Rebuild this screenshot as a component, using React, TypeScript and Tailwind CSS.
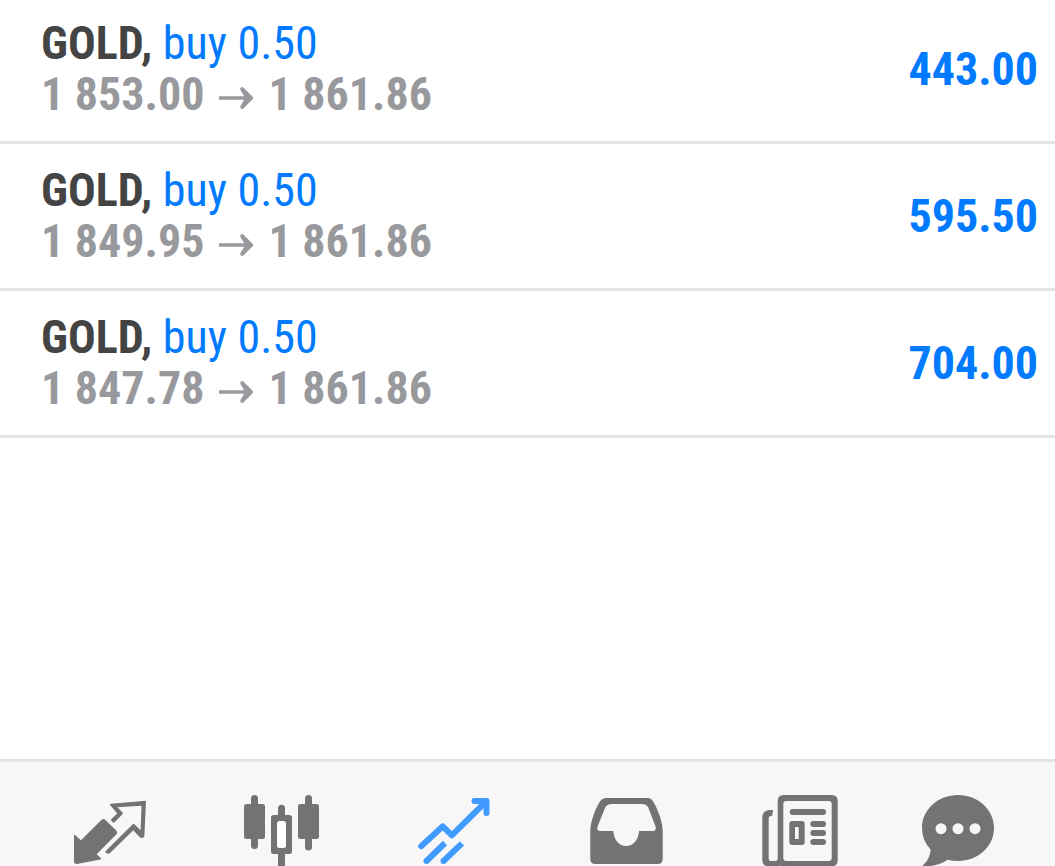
import type { ReactNode } from "react"

type Position = {
  symbol: string
  side: string
  volume: string
  open: string
  current: string
  profit: string
}

const positions: Position[] = [
  { symbol: "GOLD", side: "buy", volume: "0.50", open: "1 853.00", current: "1 861.86", profit: "443.00" },
  { symbol: "GOLD", side: "buy", volume: "0.50", open: "1 849.95", current: "1 861.86", profit: "595.50" },
  { symbol: "GOLD", side: "buy", volume: "0.50", open: "1 847.78", current: "1 861.86", profit: "704.00" },
]

function PriceArrow() {
  return (
    <svg viewBox="0 0 36 24" className="mx-3.5 mt-1.5 h-6 w-9 shrink-0" fill="currentColor" aria-hidden="true">
      <path d="M1 10.3H26.2L22.4 4Q21.8 1.6 23.4 1.2Q24.6 0.8 25.6 1.8L34.6 10.8Q35.6 12 34.6 13.2L25.6 22.2Q24.6 23.2 23.4 22.8Q21.8 22.4 22.4 20L26.2 13.7H1Z" />
    </svg>
  )
}

function PositionRow({ position }: { position: Position }) {
  return (
    <li className="flex items-center justify-between border-b-3 border-[#e4e4e4] py-[21px] pr-[17px] pl-[41px]">
      <div>
        <p>
          <span className="font-bold text-[#444444]">{position.symbol},</span>{" "}
          <span className="text-[#007aff]">
            {position.side} {position.volume}
          </span>
        </p>
        <p className="flex items-center font-bold text-[#98999d]">
          {position.open}
          <PriceArrow />
          {position.current}
        </p>
      </div>
      <p className="font-bold text-[#007aff]">{position.profit}</p>
    </li>
  )
}

function TabIcon({ children }: { children: ReactNode }) {
  return (
    <svg viewBox="0 0 80 76" className="h-[76px] w-20" fill="currentColor" aria-hidden="true">
      {children}
    </svg>
  )
}

function QuotesIcon() {
  return (
    <TabIcon>
      <path d="M4 45.5Q4 44.3 5 45L11 50.3L31.8 29.6Q33.3 28.3 34.8 29.6L46.3 40.6Q48 42.4 46.5 44.2L26.7 64.3L31 68.2Q31.8 69.2 30.5 69.5L7 74Q4 74.2 4 71Z" />
      <path d="M39.8 14.8Q39.4 13.8 41 13.7L76 10.8L74.4 46Q74.2 48 72 48Q70.4 48 69.5 47L63.3 40.2L40 63Q38.8 64 37.3 63.5L35.8 62.8Q34.8 62 35.8 61L62.5 34.5Q63.5 33.3 64.5 34.3L70.6 40.2L71.5 15.7L47.5 17.3L52.5 22.4Q53.2 23.4 52.5 24.3L44.5 32.2Q43.6 33 42.7 32.2L41.3 30.8Q40.6 29.8 41.5 29L47.2 23.5Z" />
    </TabIcon>
  )
}

function ChartIcon() {
  return (
    <TabIcon>
      <rect x="8" y="5" width="7" height="54" rx="3.5" />
      <rect x="1" y="14" width="21" height="35" rx="2.5" />
      <rect x="62" y="5" width="7" height="55.5" rx="3.5" />
      <rect x="55" y="14" width="21" height="35" rx="2.5" />
      <rect x="35" y="14.7" width="7" height="70" rx="3.5" />
      <rect x="28" y="25" width="21" height="39" rx="2.5" />
      <rect x="34" y="31" width="9" height="27" rx="2.5" fill="#fff" />
    </TabIcon>
  )
}

function TradeIcon() {
  return (
    <TabIcon>
      <g fill="none" stroke="currentColor" strokeWidth="6" strokeLinejoin="round">
        <path d="M5.2 56.3L26.8 36.3L35.8 45.3L69.5 12" strokeLinecap="round" />
        <path d="M58.5 11H70.5V23" strokeLinecap="round" />
        <path d="M10.5 71L29 53M27.5 71L46 53.3" />
      </g>
      <path d="M62 12H70V20Z" />
      <circle cx="10.5" cy="71" r="3" />
      <circle cx="27.5" cy="71" r="3" />
    </TabIcon>
  )
}

function HistoryIcon() {
  return (
    <TabIcon>
      <path
        fillRule="evenodd"
        d="M18.5 8H59.5Q63 8 64.8 11C70 19 74.7 32 74.7 41V69Q74.7 74 69.7 74H7.3Q2.3 74 2.3 69V41C2.3 32 7 19 12.2 11Q14.5 8 18.5 8ZM23.5 14Q19 14 17.2 17.5L9.4 37Q8.5 41 12.5 41H25.3C25.8 50 31.5 56 38.2 56S50.6 50 51 41H64.5Q68.5 41 67.7 37L60.2 17.5Q58.5 14 54 14Z"
      />
    </TabIcon>
  )
}

function NewsIcon() {
  return (
    <TabIcon>
      <path d="M12 20L11.3 25.7C8.5 25.8 7.7 26.5 7.7 28.5V69Q7.7 71 9.7 71H14.5Q16.7 71 16.7 69H19V76.3H8Q1.3 76.3 1.3 70V28C1.3 22 5 20 9 20Z" />
      <path fillRule="evenodd" d="M22.7 5H70.7Q76.7 5 76.7 11V70.3Q76.7 76.3 70.7 76.3H22.7Q16.7 76.3 16.7 70.3V11Q16.7 5 22.7 5ZM25.3 11Q22.3 11 22.3 14V68Q22.3 71 25.3 71H67.7Q70.7 71 70.7 68V14Q70.7 11 67.7 11Z" />
      <path fillRule="evenodd" d="M31.3 31H40.7Q43.7 31 43.7 34V52Q43.7 55 40.7 55H31.3Q28.3 55 28.3 52V34Q28.3 31 31.3 31ZM34 37V49H37.7V37Z" />
      <rect x="28.7" y="19" width="36.3" height="6" rx="3" />
      <rect x="49.3" y="31" width="15.7" height="6" rx="3" />
      <rect x="49.3" y="40" width="15.7" height="6" rx="3" />
      <rect x="49.3" y="49" width="15.7" height="6" rx="3" />
    </TabIcon>
  )
}

function MessagesIcon() {
  return (
    <TabIcon>
      <path d="M39 5C59 5 75 19.5 75 38S59 71 39 71Q33.5 71 28.7 69.8Q19 76.5 4.5 76.5Q2.5 76.5 4.2 75C8.5 71.5 11 66 11.7 59.5Q3 50.5 3 38C3 19.5 19 5 39 5Z" />
      <g fill="#f7f7f7">
        <circle cx="22" cy="38.7" r="5.5" />
        <circle cx="39" cy="38.7" r="5.5" />
        <circle cx="56" cy="38.7" r="5.5" />
      </g>
    </TabIcon>
  )
}

const tabs = [
  { label: "Quotes", icon: QuotesIcon },
  { label: "Chart", icon: ChartIcon },
  { label: "Trade", icon: TradeIcon, active: true },
  { label: "History", icon: HistoryIcon },
  { label: "News", icon: NewsIcon },
  { label: "Messages", icon: MessagesIcon },
]

export default function App() {
  return (
    <div className="flex min-h-screen flex-col bg-white font-['Roboto_Condensed',Roboto,sans-serif] text-[46px] leading-[51px]">
      <main className="flex-1">
        <ul className="-mt-[3px]">
          {positions.map((position) => (
            <PositionRow key={position.open} position={position} />
          ))}
        </ul>
      </main>

      {/* Bottom tab bar */}
      <nav className="grid grid-cols-[repeat(5,6fr)_5fr] border-t-3 border-[#e4e4e4] bg-[#f7f7f7] px-6 pt-7">
        {tabs.map(({ label, icon: Icon, active }) => (
          <button
            key={label}
            type="button"
            aria-label={label}
            aria-current={active ? "page" : undefined}
            className={active ? "flex justify-center text-[#419bff]" : "flex justify-center text-[#737373]"}
          >
            <Icon />
          </button>
        ))}
      </nav>
    </div>
  )
}
